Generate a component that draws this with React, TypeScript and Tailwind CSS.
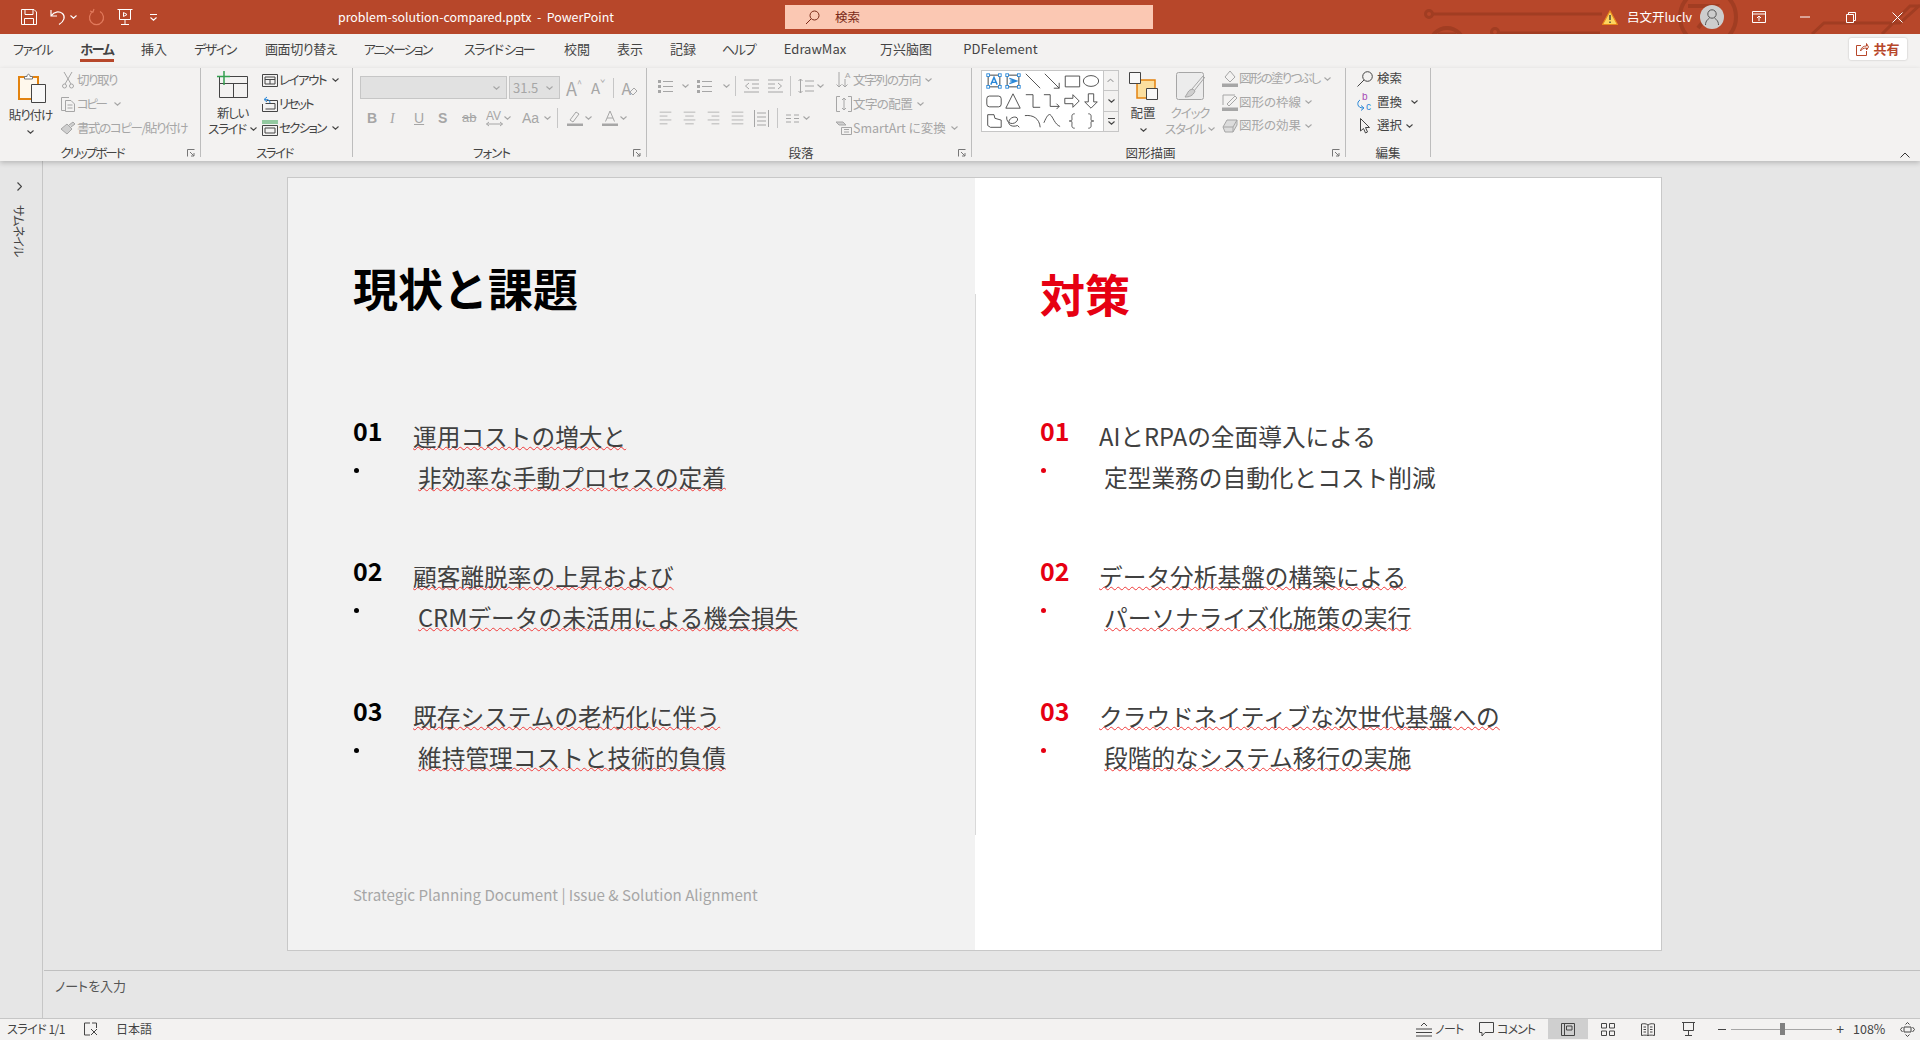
import React from "react";

const INK = "#444444";
const DIM = "#a6a6a6";
const BLUE = "#2b88d8";

type IcoProps = { w?: number; h?: number; vb?: string; c?: string; children: React.ReactNode };

const Ico: React.FC<IcoProps> = ({ w = 16, h = 16, vb, c = INK, children }) => (
  <svg width={w} height={h} viewBox={vb ?? `0 0 ${w} ${h}`} fill="none" stroke={c} strokeWidth="1" className="shrink-0">
    {children}
  </svg>
);

const Chev: React.FC<{ c?: string }> = ({ c = INK }) => (
  <svg width="7" height="4" viewBox="0 0 7 4" fill="none" stroke={c} strokeWidth="1.1" className="shrink-0">
    <path d="M0.5 0.5 3.5 3.2 6.5 0.5" />
  </svg>
);

const Launcher: React.FC = () => (
  <div className="absolute right-[5px] top-[5px]">
    <Ico w={8} h={8} c="#777777">
      <path d="M0.5 7.5V0.5H7.5M3 3 7 7M7 4V7H4" />
    </Ico>
  </div>
);

const Group: React.FC<{ w: string; label: string; labelCls?: string; launcher?: boolean; children: React.ReactNode }> = ({
  w,
  label,
  labelCls = "",
  launcher,
  children,
}) => (
  <div className={`flex shrink-0 ${w}`}>
    <div className="flex min-w-0 flex-1 flex-col">
      <div className="flex h-[76px]">{children}</div>
      <div className={`relative h-[17px] text-center text-[12.5px] leading-[17px] text-[#444444] ${labelCls}`}>
        {label}
        {launcher && <Launcher />}
      </div>
    </div>
    <div className="h-[89px] w-px shrink-0 bg-[#bdbdbd]" />
  </div>
);

const Row: React.FC<{
  dim?: boolean;
  icon?: React.ReactNode;
  label: string;
  chev?: boolean;
  gap?: string;
  track?: string;
  rowH?: string;
}> = ({ dim, icon, label, chev = true, gap = "ml-[6px]", track = "", rowH = "h-6" }) => (
  <div className={`flex items-center whitespace-nowrap text-[12.5px] ${rowH} ${dim ? "text-[#a6a6a6]" : "text-[#444444]"}`}>
    <div className="flex w-[19px] shrink-0 justify-center">{icon}</div>
    <span className={track}>{label}</span>
    {chev && (
      <span className={`flex ${gap}`}>
        <Chev c={dim ? DIM : INK} />
      </span>
    )}
  </div>
);

const TitleBar: React.FC = () => (
  <div className="relative flex h-[34px] items-center overflow-hidden bg-[#b7472a] pl-[20px] text-white">
    <svg width="500" height="34" viewBox="0 0 500 34" fill="none" stroke="#a13d22" strokeWidth="3" className="absolute left-[1420px] top-0">
      <circle cx="9" cy="14" r="3.5" />
      <path d="M13 14H182" />
      <circle cx="75" cy="32" r="3.5" />
      <path d="M79 33H180" />
      <circle cx="27" cy="45" r="17" strokeWidth="4" />
      <path d="M18 34H36" />
      <circle cx="288" cy="17" r="28" strokeWidth="4" />
      <path d="M268 6H296L278 28M296 6V14" strokeWidth="4" />
      <path d="M392 34 404 23H480L500 5M462 34 490 6H500" />
    </svg>
    <div className="relative flex items-center">
      <Ico w={18} h={18} c="#ffffff">
        <path d="M1.5 1.5H14L16.5 4V16.5H1.5ZM5 1.5V6.5H13V1.5M4.5 16.5V10.5H13.5V16.5" />
      </Ico>
      <div className="ml-[12px]">
        <Ico w={16} h={18} c="#ffffff">
          <path d="M1 2V8H7M1.5 7.5C4 3.5 9 3 12.5 5.5C15.5 8.5 14.5 13 9 16.5" strokeWidth="1.2" />
        </Ico>
      </div>
      <div className="ml-[4px]">
        <Chev c="#ffffff" />
      </div>
      <div className="ml-[11px]">
        <Ico w={17} h={18} c="#e27a5d">
          <path d="M5 3.5A7 7 0 1 0 12 3.5M6 1 5 4 2 3" strokeWidth="1.2" />
        </Ico>
      </div>
      <div className="ml-[12px]">
        <Ico w={16} h={18} c="#ffffff">
          <path d="M0.5 1.5H15.5M2.5 1.5V11.5H13.5V1.5M8 11.5V16.5M4 16.5H12M6.5 4.5V8.5L10 6.5Z" />
        </Ico>
      </div>
      <div className="ml-[17px] flex flex-col items-center gap-[2px]">
        <div className="h-px w-[7px] bg-white" />
        <Chev c="#ffffff" />
      </div>
    </div>
    <div className="relative ml-[181px] w-[447px] whitespace-pre text-[12.4px]">problem-solution-compared.pptx  -  PowerPoint</div>
    <div className="relative flex h-[24px] w-[368px] items-center bg-[#fbc8b3] pl-[20px] text-[12.5px] text-[#7a2a18]">
      <Ico w={15} h={15} c="#7a2a18">
        <circle cx="9.5" cy="5.5" r="4.5" />
        <path d="M6 9 1 14" />
      </Ico>
      <span className="ml-[15px]">検索</span>
    </div>
    <div className="relative ml-[449px] flex items-center">
      <Ico w={16} h={15}>
        <path d="M8 1 15.5 14.5H0.5Z" fill="#fcd55f" stroke="#e8891c" strokeWidth="1.2" />
        <path d="M8 5V10M8 11.5V13" stroke="#333333" strokeWidth="1.3" />
      </Ico>
      <span className="ml-[9px] w-[73px] whitespace-nowrap text-[12.5px]">吕文开luclv</span>
      <div className="flex h-[24px] w-[24px] items-center justify-center rounded-full bg-[#cdcdcd]">
        <Ico w={16} h={18} c="#555555">
          <circle cx="8" cy="6" r="4.2" />
          <path d="M1.5 17C1.5 12.5 4.5 11 5.5 10M14.5 17C14.5 12.5 11.5 11 10.5 10" />
        </Ico>
      </div>
      <div className="ml-[28px]">
        <Ico w={14} h={12} c="#ffffff">
          <path d="M0.5 0.5H13.5V11.5H0.5ZM0.5 3H13.5M7 10V5M5 7 7 5 9 7" />
        </Ico>
      </div>
      <div className="ml-[34px]">
        <Ico w={10} h={2} c="#ffffff">
          <path d="M0 1H10" />
        </Ico>
      </div>
      <div className="ml-[36px]">
        <Ico w={10} h={11} c="#ffffff">
          <path d="M0.5 2.5H7.5V10.5H0.5ZM2.5 2.5V0.5H9.5V8.5H7.5" />
        </Ico>
      </div>
      <div className="ml-[36px]">
        <Ico w={11} h={11} c="#ffffff">
          <path d="M0.5 0.5 10.5 10.5M10.5 0.5 0.5 10.5" />
        </Ico>
      </div>
    </div>
  </div>
);

const tabs = [
  { label: "ファイル", cls: "w-[38px] ml-[13px] tracking-[-1.5px]" },
  { label: "ホーム", cls: "w-[34px] ml-[29px] font-bold border-b-[3px] border-[#b7472a] tracking-[-1.2px]" },
  { label: "挿入", cls: "w-[25px] ml-[27px]" },
  { label: "デザイン", cls: "w-[42px] ml-[28px] tracking-[-1.5px]" },
  { label: "画面切り替え", cls: "w-[70px] ml-[29px] tracking-[-0.4px]" },
  { label: "アニメーション", cls: "w-[69px] ml-[28px] tracking-[-1.9px]" },
  { label: "スライド ショー", cls: "w-[69px] ml-[32px] tracking-[-1.5px]" },
  { label: "校閲", cls: "w-[26px] ml-[31px]" },
  { label: "表示", cls: "w-[25px] ml-[27px]" },
  { label: "記録", cls: "w-[26px] ml-[28px]" },
  { label: "ヘルプ", cls: "w-[33px] ml-[26px] tracking-[-1.3px]" },
  { label: "EdrawMax", cls: "w-[66px] ml-[27px]" },
  { label: "万兴脑图", cls: "w-[52px] ml-[32px]" },
  { label: "PDFelement", cls: "w-[77px] ml-[30px]" },
];

const TabBar: React.FC = () => (
  <div className="relative flex h-[34px] items-start bg-[#f3f2f1] text-[13px] leading-[30px] text-[#444444]">
    {tabs.map((t) => (
      <div key={t.label} className={`h-[28px] shrink-0 whitespace-pre text-center ${t.cls}`}>
        {t.label}
      </div>
    ))}
    <div className="ml-auto mr-[13px] mt-[4px] flex h-[22px] w-[58px] items-center justify-center gap-[4px] rounded-[2px] bg-white text-[13px] font-bold text-[#b7472a] shadow-[0_0_2px_rgba(0,0,0,0.25)]">
      <Ico w={13} h={14} c="#b7472a">
        <path d="M5 3.5H0.5V13.5H10.5V9M4.5 9C5 5.5 7.5 4 10.5 4V1.5L12.5 5 10.5 8V6C8 6 5.5 7 4.5 9Z" />
      </Ico>
      共有
    </div>
  </div>
);

const Clipboard: React.FC = () => (
  <Group w="w-[201px]" label="クリップボード" labelCls="pr-[16px] tracking-[-2px]" launcher>
    <div className="flex w-[58px] shrink-0 flex-col items-center pl-[3px] pt-[5px] text-[12.5px] text-[#444444]">
      <div className="pl-[3px]">
        <Ico w={28} h={30}>
          <path d="M1 4H20V26H1Z" stroke="#e3830f" strokeWidth="2" fill="#fff8ec" />
          <path d="M6.5 6V3.5H9C9 0.5 12 0.5 12 3.5H14.5V6Z" stroke="#777777" fill="#ffffff" />
          <path d="M13.5 11.5H27.5V29.5H13.5Z" stroke="#444444" fill="#f8f8f8" />
        </Ico>
      </div>
      <span className="mt-[4px] whitespace-nowrap leading-[16px] tracking-[-1px]">貼り付け</span>
      <div className="mt-[7px]">
        <Chev />
      </div>
    </div>
    <div className="flex flex-col">
      <Row
        dim
        chev={false}
        label="切り取り"
        track="tracking-[-1.5px]"
        icon={
          <Ico w={12} h={18} c={DIM}>
            <path d="M2 1 9 13M10 1 3 13" />
            <circle cx="2.5" cy="15" r="2" />
            <circle cx="9.5" cy="15" r="2" />
          </Ico>
        }
      />
      <Row
        dim
        label="コピー"
        gap="ml-[9px]"
        track="tracking-[-2.5px]"
        icon={
          <Ico w={16} h={16} c={DIM}>
            <path d="M5 14.5H1.5V1.5H9M5.5 4.5H11L14.5 8V15.5H5.5ZM7.5 9H12.5M7.5 12H12.5" />
          </Ico>
        }
      />
      <Row
        dim
        chev={false}
        label="書式のコピー/貼り付け"
        track="tracking-[-1.4px]"
        icon={
          <Ico w={16} h={14} c={DIM}>
            <path d="M1 8 7 3 12 8 7 13ZM9 4 13 1 15 3 11 6" fill="#cfcfcf" />
          </Ico>
        }
      />
    </div>
  </Group>
);

const Slides: React.FC = () => (
  <Group w="w-[152px]" label="スライド" labelCls="pr-[4px] tracking-[-1.5px]">
    <div className="flex w-[59px] shrink-0 flex-col items-center pl-[4px] pt-[3px] text-[12.5px] leading-[16px] text-[#444444] tracking-[-1.3px]">
      <Ico w={31} h={27}>
        <path d="M2.5 5.5H30.5V26.5H2.5ZM2.5 12.5H30.5M16.5 12.5V26.5" />
        <path d="M0 5.5H13M7 0V14" stroke="#33a04f" strokeWidth="1.5" />
      </Ico>
      <span className="mt-[7px] whitespace-nowrap">新しい</span>
      <div className="flex items-center gap-[4px] whitespace-nowrap">
        スライド
        <Chev />
      </div>
    </div>
    <div className="flex flex-col">
      <Row
        label="レイアウト"
        track="tracking-[-1.5px]"
        icon={
          <Ico w={16} h={13}>
            <path d="M0.5 0.5H15.5V12.5H0.5ZM3 3H13V10H3ZM3 5.5H13M8 5.5V10" />
          </Ico>
        }
      />
      <Row
        chev={false}
        label="リセット"
        track="tracking-[-2px]"
        icon={
          <Ico w={16} h={16}>
            <path d="M4.5 4.5H15.5V15.5H0.5V8M3.5 7.5H13V13H3.5" />
            <path d="M5 1 2 3.5 5 6M2.5 3.5C6 3 8 4 8 7" stroke={BLUE} />
          </Ico>
        }
      />
      <Row
        label="セクション"
        track="tracking-[-1.7px]"
        icon={
          <Ico w={16} h={16}>
            <path d="M0 1H16M0 3H16" stroke="#33a04f" />
            <path d="M0.5 5.5H15.5V15.5H0.5ZM3 8H13V13H3Z" />
          </Ico>
        }
      />
    </div>
  </Group>
);

const Btn: React.FC<{ cls: string; children: React.ReactNode }> = ({ cls, children }) => (
  <div className={`flex shrink-0 items-center ${cls}`}>{children}</div>
);

const Font: React.FC = () => (
  <Group w="w-[294px]" label="フォント" labelCls="pr-[16px] tracking-[-1px]" launcher>
    <div className="flex flex-col pl-[7px] pt-[8px] text-[#a6a6a6]">
      <div className="flex h-[23px] items-center">
        <div className="flex h-[23px] w-[147px] items-center justify-end border border-[#c6c6c6] bg-[#e1e1e1] pr-[6px]">
          <Chev c={DIM} />
        </div>
        <div className="ml-[2px] flex h-[23px] w-[51px] items-center justify-between border border-[#c6c6c6] bg-[#e1e1e1] pl-[3px] pr-[6px] text-[13px]">
          31.5
          <Chev c={DIM} />
        </div>
        <span className="ml-[6px] text-[18px] leading-none">A</span>
        <span className="-mt-[8px] text-[9px]">^</span>
        <span className="ml-[9px] text-[15px] leading-none">A</span>
        <span className="-mt-[8px] text-[9px]">ˇ</span>
        <div className="ml-[8px] h-[20px] w-px bg-[#c6c6c6]" />
        <span className="ml-[7px] text-[16px] leading-none">A</span>
        <div className="-ml-[2px] mt-[8px]">
          <Ico w={9} h={9} c={DIM}>
            <path d="M1 5 5 1 8 4 4 8Z" />
          </Ico>
        </div>
      </div>
      <div className="mt-[7px] flex h-6 items-center text-[14px]">
        <Btn cls="ml-[7px] w-[23px] font-bold font-['Liberation_Sans',sans-serif]">B</Btn>
        <Btn cls="w-[24px] italic font-['Liberation_Serif',serif]">I</Btn>
        <Btn cls="w-[24px] underline font-['Liberation_Sans',sans-serif]">U</Btn>
        <Btn cls="w-[24px] font-bold font-['Liberation_Sans',sans-serif]">S</Btn>
        <Btn cls="w-[24px] line-through text-[13px] font-['Liberation_Sans',sans-serif]">ab</Btn>
        <Btn cls="w-[24px]">
          <Ico w={17} h={18} c={DIM}>
            <text x="0" y="11" fontSize="12" fontFamily="Liberation Sans" fill={DIM} stroke="none">
              AV
            </text>
            <path d="M0.5 15H16.5M3 13 0.5 15 3 17M14 13 16.5 15 14 17" />
          </Ico>
          <div className="ml-[1px]">
            <Chev c={DIM} />
          </div>
        </Btn>
        <Btn cls="ml-[12px] w-[22px] font-['Liberation_Sans',sans-serif]">Aa</Btn>
        <Btn cls="w-[13px]">
          <Chev c={DIM} />
        </Btn>
        <div className="h-[20px] w-px bg-[#c6c6c6]" />
        <Btn cls="ml-[9px] w-[24px]">
          <Ico w={16} h={16} c={DIM}>
            <path d="M3 10 9 2 12 4 6 12Z" />
            <path d="M0 13.5H16V16H0Z" fill={DIM} stroke="none" />
          </Ico>
          <div className="ml-[2px]">
            <Chev c={DIM} />
          </div>
        </Btn>
        <Btn cls="ml-[11px] w-[24px]">
          <Ico w={16} h={16} c={DIM}>
            <path d="M3.5 11.5 8 1 12.5 11.5M5 8H11" />
            <path d="M0 13.5H16V16H0Z" fill={DIM} stroke="none" />
          </Ico>
          <div className="ml-[2px]">
            <Chev c={DIM} />
          </div>
        </Btn>
      </div>
    </div>
  </Group>
);

const lines = (rows: [number, number][]) => rows.map(([a, b], i) => <path key={i} d={`M${a} ${2.5 + i * 5}H${b}`} />);

const ListIco: React.FC = () => (
  <Ico w={15} h={14} c={DIM}>
    <path d="M0 1H3V4H0ZM0 6H3V9H0ZM0 11H3V14H0Z" fill={DIM} stroke="none" />
    {lines([[5, 15], [5, 15], [5, 15]])}
  </Ico>
);

const Align: React.FC<{ rows: [number, number][] }> = ({ rows }) => (
  <Ico w={15} h={14} vb="0 0 15 18" c={DIM}>
    {rows.map(([a, b], i) => (
      <path key={i} d={`M${a} ${1.5 + i * 5}H${b}`} />
    ))}
  </Ico>
);

const Paragraph: React.FC = () => (
  <Group w="w-[325px]" label="段落" labelCls="pr-[16px]" launcher>
    <div className="flex w-[187px] shrink-0 flex-col pl-[11px] pt-[6px]">
      <div className="flex h-6 items-center">
        <Btn cls="w-[24px]">
          <ListIco />
        </Btn>
        <Btn cls="w-[15px]">
          <Chev c={DIM} />
        </Btn>
        <Btn cls="w-[26px]">
          <ListIco />
        </Btn>
        <Btn cls="w-[12px]">
          <Chev c={DIM} />
        </Btn>
        <div className="h-[20px] w-px bg-[#c6c6c6]" />
        <Btn cls="ml-[8px] w-[24px]">
          <Ico w={15} h={14} c={DIM}>
            <path d="M0 1H15M8 5H15M8 9H15M0 13H15M5 4 1.5 7 5 10" />
          </Ico>
        </Btn>
        <Btn cls="w-[22px]">
          <Ico w={15} h={14} c={DIM}>
            <path d="M0 1H15M0 5H7M0 9H7M0 13H15M10 4 13.5 7 10 10" />
          </Ico>
        </Btn>
        <div className="h-[20px] w-px bg-[#c6c6c6]" />
        <Btn cls="ml-[7px] w-[19px]">
          <Ico w={16} h={16} c={DIM}>
            <path d="M2.5 1V15M0.5 3 2.5 1 4.5 3M0.5 13 2.5 15 4.5 13M7 3H16M7 8H16M7 13H16" />
          </Ico>
        </Btn>
        <Chev c={DIM} />
      </div>
      <div className="mt-[8px] flex h-6 items-center">
        <Btn cls="w-[24px]">
          <Align rows={[[0, 15], [0, 10], [0, 15], [0, 10]]} />
        </Btn>
        <Btn cls="w-[24px]">
          <Align rows={[[0, 15], [2, 13], [0, 15], [2, 13]]} />
        </Btn>
        <Btn cls="w-[24px]">
          <Align rows={[[0, 15], [5, 15], [0, 15], [5, 15]]} />
        </Btn>
        <Btn cls="w-[24px]">
          <Align rows={[[0, 15], [0, 15], [0, 15], [0, 15]]} />
        </Btn>
        <Btn cls="w-[23px]">
          <Ico w={15} h={17} c={DIM}>
            <path d="M0.5 0V17M14.5 0V17M3 3H12M3 7H12M3 11H12M3 15H12" />
          </Ico>
        </Btn>
        <div className="h-[20px] w-px bg-[#c6c6c6]" />
        <Btn cls="ml-[8px] w-[17px]">
          <Ico w={13} h={9} c={DIM}>
            <path d="M0 1H5M8 1H13M0 4.5H5M8 4.5H13M0 8H5M8 8H13" />
          </Ico>
        </Btn>
        <Chev c={DIM} />
      </div>
    </div>
    <div className="flex flex-col">
      <Row
        dim
        gap="ml-[5px]"
        label="文字列の方向"
        track="tracking-[-1.2px]"
        icon={
          <Ico w={16} h={18} c={DIM}>
            <path d="M3 1V16M0.5 13.5 3 16 5.5 13.5M9 8V16M6.5 13.5 9 16 11.5 13.5" />
            <text x="9" y="7" fontSize="8" fontFamily="Liberation Sans" fill={DIM} stroke="none">
              A
            </text>
          </Ico>
        }
      />
      <Row
        dim
        gap="ml-[5px]"
        label="文字の配置"
        track="tracking-[-0.6px]"
        icon={
          <Ico w={16} h={16} c={DIM}>
            <path d="M4 0.5H0.5V15.5H4M12 0.5H15.5V15.5H12M8 2V14M6 4 8 2 10 4M6 12 8 14 10 12" />
          </Ico>
        }
      />
      <Row
        dim
        gap="ml-[5px]"
        label="SmartArt に変換"
        icon={
          <Ico w={16} h={14} c={DIM}>
            <path d="M0 1H7L10 4H3Z" fill="#cfcfcf" />
            <path d="M5.5 6.5H15.5V13.5H5.5ZM8 8.5H13M8 11H13" />
          </Ico>
        }
      />
    </div>
  </Group>
);

const Tb: React.FC<{ rot?: boolean }> = ({ rot }) => (
  <>
    <path d="M3.5 3.5H16.5V16.5H3.5Z" stroke="#333333" />
    {[
      [3.5, 3.5],
      [16.5, 3.5],
      [3.5, 16.5],
      [16.5, 16.5],
    ].map(([x, y]) => (
      <rect key={`${x}-${y}`} x={x - 1.5} y={y - 1.5} width="3" height="3" fill="#ffffff" stroke={BLUE} />
    ))}
    {rot ? (
      <path d="M6 7 14 10 6 13M7 10H12" stroke={BLUE} strokeWidth="1.6" />
    ) : (
      <path d="M6.5 14 10 6 13.5 14M8 11.5H12" stroke={BLUE} strokeWidth="1.6" />
    )}
  </>
);

const shapes: React.ReactNode[] = [
  <Tb key="a" />,
  <Tb key="b" rot />,
  <path key="c" d="M2 2 18 18" />,
  <path key="d" d="M2 2 18 18M18 12V18H12" />,
  <path key="e" d="M2.5 4.5H18.5V16.5H2.5Z" />,
  <ellipse key="f" cx="10" cy="10" rx="8.5" ry="6" />,
  <rect key="g" x="2" y="4.5" width="16" height="12" rx="3" />,
  <path key="h" d="M10 2 18 18H2Z" />,
  <path key="i" d="M2 3H10V17H18" />,
  <path key="j" d="M1 3H8V16H18M15 13 18 16 15 19" />,
  <path key="k" d="M2 7H11V3L18 10 11 17V13H2Z" />,
  <path key="l" d="M7 2H13V11H17L10 18 3 11H7Z" />,
  <path key="m" d="M3 3H10L11 7 18 9V17H6L3 15Z" strokeLinejoin="round" />,
  <path key="n" d="M3 5C2 14 12 15 15 9C16 4 8 5 6 9C3 15 10 17 15 15L17 17" />,
  <path key="o" d="M1 4C10 3 17 7 18 17" />,
  <path key="p" d="M1 12C4 5 6 2 8 3C11 5 13 14 19 16" />,
  <path key="q" d="M13 2C9 2 10 5 10 8C10 10 9 10 7 10C9 10 10 10 10 12C10 15 9 18 13 18" />,
  <path key="r" d="M7 2C11 2 10 5 10 8C10 10 11 10 13 10C11 10 10 10 10 12C10 15 11 18 7 18" />,
];

const Drawing: React.FC = () => (
  <Group w="w-[374px]" label="図形描画" labelCls="pr-[16px]" launcher>
    <div className="ml-[9px] mt-[2px] flex h-[62px] w-[138px] shrink-0 border border-[#c6c6c6] bg-white">
      <div className="grid flex-1 grid-cols-6 px-[2px]">
        {shapes.map((s, i) => (
          <div key={i} className="flex items-center justify-center">
            <Ico w={18} h={18} vb="0 0 20 20">
              {s}
            </Ico>
          </div>
        ))}
      </div>
      <div className="flex w-[15px] shrink-0 flex-col border-l border-[#c6c6c6] bg-[#f3f2f1]">
        <div className="flex flex-1 rotate-180 items-center justify-center">
          <Chev c={DIM} />
        </div>
        <div className="flex flex-1 items-center justify-center border-t border-[#c6c6c6]">
          <Chev />
        </div>
        <div className="flex flex-1 flex-col items-center justify-center gap-[2px] border-t border-[#c6c6c6]">
          <div className="h-px w-[7px] bg-[#444444]" />
          <Chev />
        </div>
      </div>
    </div>
    <div className="ml-[2px] flex w-[44px] shrink-0 flex-col items-center pt-[4px] text-[12.5px] leading-[16px] text-[#444444]">
      <Ico w={29} h={28}>
        <path d="M8 8H26V26H8Z" stroke="#e3830f" strokeWidth="1.5" fill="#fbdf9f" />
        <path d="M0.5 0.5H11.5V11.5H0.5Z" fill="#f8f8f8" />
        <path d="M17.5 16.5H28.5V27.5H17.5Z" fill="#f8f8f8" />
      </Ico>
      <span className="mt-[5px]">配置</span>
      <div className="mt-[7px]">
        <Chev />
      </div>
    </div>
    <div className="ml-[3px] flex w-[44px] shrink-0 flex-col items-center pt-[4px] text-[12.5px] leading-[16px] text-[#a6a6a6] tracking-[-1.2px]">
      <Ico w={29} h={28} c={DIM}>
        <rect x="0.5" y="0.5" width="27" height="27" rx="2" fill="#ececec" />
        <path d="M27 4 16 17M29 5 18 19" />
        <path d="M11 22C13 17 17 16 19 19C17 24 13 25 9 25Z" fill="#cfcfcf" />
      </Ico>
      <span className="mt-[5px] whitespace-nowrap">クイック</span>
      <div className="flex items-center gap-[3px] whitespace-nowrap">
        スタイル
        <Chev c={DIM} />
      </div>
    </div>
    <div className="-mt-px ml-[8px] flex flex-col">
      <Row
        dim
        gap="ml-[4px]"
        rowH="h-[23.5px]"
        label="図形の塗りつぶし"
        track="tracking-[-1.7px]"
        icon={
          <Ico w={16} h={17} c={DIM}>
            <path d="M3 7 8 1 13 7 8 12Z" />
            <path d="M0 13.5H16V17H0Z" fill={DIM} stroke="none" />
          </Ico>
        }
      />
      <Row
        dim
        gap="ml-[4px]"
        rowH="h-[23.5px]"
        label="図形の枠線"
        icon={
          <Ico w={16} h={17} c={DIM}>
            <path d="M1 11V1H13M5 10 13 2 15 4 7 12Z" />
            <path d="M0 13.5H16V17H0Z" fill={DIM} stroke="none" />
          </Ico>
        }
      />
      <Row
        dim
        gap="ml-[4px]"
        rowH="h-[23.5px]"
        label="図形の効果"
        icon={
          <Ico w={16} h={14} c={DIM}>
            <path d="M1 8 5 1H15V6L11 13H3Z" fill="#dcdcdc" />
            <path d="M1 8H11V13M11 8 15 1" />
          </Ico>
        }
      />
    </div>
  </Group>
);

const Edit: React.FC = () => (
  <Group w="w-[85px]" label="編集">
    <div className="-mt-px flex flex-col pl-[11px]">
      <div className="flex h-[23.5px] items-center text-[12.5px] text-[#444444]">
        <div className="w-[20px] shrink-0">
          <Ico w={16} h={16}>
            <circle cx="10.5" cy="5.5" r="4.8" />
            <path d="M7 9 0.5 15.5" />
          </Ico>
        </div>
        検索
      </div>
      <div className="flex h-[23.5px] items-center text-[12.5px] text-[#444444]">
        <div className="w-[20px] shrink-0">
          <Ico w={15} h={18}>
            <text x="5" y="7" fontSize="10" fontFamily="Liberation Sans" fill="#a64bb5" stroke="none">
              b
            </text>
            <text x="9" y="17" fontSize="10" fontFamily="Liberation Sans" fill={BLUE} stroke="none">
              c
            </text>
            <path d="M3 7C-0.5 9 0 15 6 15M4 12.5 7 15 4 17.5" stroke={BLUE} />
          </Ico>
        </div>
        置換
        <div className="ml-[9px]">
          <Chev />
        </div>
      </div>
      <div className="flex h-[23.5px] items-center text-[12.5px] text-[#444444]">
        <div className="w-[20px] shrink-0 pl-[3px]">
          <Ico w={10} h={16}>
            <path d="M0.5 0.5V13L3.5 10.5 5.5 15 7.5 14 5.5 9.5H9.5Z" />
          </Ico>
        </div>
        選択
        <div className="ml-[4px]">
          <Chev />
        </div>
      </div>
    </div>
  </Group>
);

const Ribbon: React.FC = () => (
  <div className="relative z-10 flex h-[93px] bg-[#f3f2f1] shadow-[0_2px_5px_rgba(0,0,0,0.2)]">
    <Clipboard />
    <Slides />
    <Font />
    <Paragraph />
    <Drawing />
    <Edit />
    <div className="ml-auto mr-[10px] mt-[84px]">
      <svg width="10" height="6" viewBox="0 0 10 6" fill="none" stroke="#333333">
        <path d="M0.5 5.5 5 1 9.5 5.5" />
      </svg>
    </div>
  </div>
);

type Item = { n: string; a: string; b: string; checkA?: boolean };

const problems: Item[] = [
  { n: "01", a: "運用コストの増大と", b: "非効率な手動プロセスの定着", checkA: true },
  { n: "02", a: "顧客離脱率の上昇および", b: "CRMデータの未活用による機会損失", checkA: true },
  { n: "03", a: "既存システムの老朽化に伴う", b: "維持管理コストと技術的負債", checkA: true },
];

const answers: (Item & { checkB: boolean })[] = [
  { n: "01", a: "AIとRPAの全面導入による", b: "定型業務の自動化とコスト削減", checkB: false },
  { n: "02", a: "データ分析基盤の構築による", b: "パーソナライズ化施策の実行", checkA: true, checkB: true },
  { n: "03", a: "クラウドネイティブな次世代基盤への", b: "段階的なシステム移行の実施", checkA: true, checkB: true },
];

const squiggle = "underline decoration-wavy decoration-[#f03a3a] decoration-1 underline-offset-[0px]";

const PointRow: React.FC<{ item: Item; checkB?: boolean; red?: boolean; numW: string }> = ({ item, checkB = true, red, numW }) => (
  <div className="flex h-[140px]">
    <div className={`shrink-0 ${numW}`}>
      <div className={`text-[25px] font-bold leading-[29px] ${red ? "text-[#e60012]" : "text-black"}`}>{item.n}</div>
      <div className={`ml-[1px] mt-[23px] h-[5px] w-[5px] rounded-full ${red ? "bg-[#e60012]" : "bg-black"}`} />
    </div>
    <div className="text-[23.7px] leading-[41px] text-[#404040] [text-decoration-skip-ink:none]">
      <div className="whitespace-nowrap">
        <span className={item.checkA ? squiggle : ""}>{item.a}</span>
      </div>
      <div className="ml-[5px] whitespace-nowrap">
        <span className={checkB ? squiggle : ""}>{item.b}</span>
      </div>
    </div>
  </div>
);

const Slide: React.FC = () => (
  <div className="flex h-[774px] w-[1375px] shrink-0 border border-[#c8c8c8] bg-white [font-feature-settings:normal]">
    <div className="w-[687px] shrink-0 bg-[#f2f2f2] pl-[65px]">
      <div className="h-[238px] pt-[80px] text-[45px] font-bold leading-[60px] text-black">現状と課題</div>
      {problems.map((p) => (
        <PointRow key={p.n} item={p} numW="w-[60px]" />
      ))}
      <div className="mt-[48px] text-[15.1px] leading-[20px] text-[#a6a6a6]">Strategic Planning Document | Issue &amp; Solution Alignment</div>
    </div>
    <div className="mt-[116px] h-[541px] w-px shrink-0 bg-[#d9d9d9]" />
    <div className="flex-1 pl-[64px]">
      <div className="h-[238px] pt-[86px] text-[45px] font-bold leading-[60px] text-[#e60012]">対策</div>
      {answers.map((p) => (
        <PointRow key={p.n} item={p} checkB={p.checkB} red numW="w-[59px]" />
      ))}
    </div>
  </div>
);

const StatusBar: React.FC = () => (
  <div className="flex h-[22px] items-center border-t border-[#c6c6c6] bg-[#f3f2f1] pb-px text-[12px] text-[#444444]">
    <span className="ml-[7px] w-[77px] whitespace-nowrap tracking-[-0.5px]">スライド 1/1</span>
    <Ico w={14} h={14}>
      <path d="M6 1H0.5V13H6M8 1H12.5V6M7 7 13 13M13 7 7 13" />
    </Ico>
    <span className="ml-[18px]">日本語</span>
    <div className="ml-auto flex h-full items-center">
      <Ico w={16} h={16}>
        <path d="M0 8H16M0 11.5H16M0 15H16M5 5 8 2 11 5" />
      </Ico>
      <span className="ml-[3px] w-[44px] tracking-[-0.7px]">ノート</span>
      <Ico w={15} h={15}>
        <path d="M0.5 0.5H14.5V10.5H6L3 14V10.5H0.5Z" />
      </Ico>
      <span className="ml-[3px] w-[51px] whitespace-nowrap tracking-[-1px]">コメント</span>
      <div className="flex h-full w-[40px] items-center justify-center bg-[#cfcfcf]">
        <Ico w={14} h={13}>
          <path d="M0.5 0.5H13.5V12.5H0.5ZM3.5 0.5V12.5M5.5 3H11V7H5.5Z" />
        </Ico>
      </div>
      <div className="flex w-[40px] justify-center">
        <Ico w={14} h={13}>
          <path d="M0.5 0.5H5.5V5H0.5ZM8.5 0.5H13.5V5H8.5ZM0.5 8H5.5V12.5H0.5ZM8.5 8H13.5V12.5H8.5Z" />
        </Ico>
      </div>
      <div className="flex w-[40px] justify-center">
        <Ico w={14} h={13}>
          <path d="M7 2C5 0.5 3 0.5 0.5 1V12.5C3 12 5 12 7 12.5C9 12 11 12 13.5 12.5V1C11 0.5 9 0.5 7 2ZM7 2V12.5M2.5 4H5M2.5 6.5H5M2.5 9H5M9 4H11.5M9 6.5H11.5M9 9H11.5" />
        </Ico>
      </div>
      <div className="flex w-[40px] justify-center">
        <Ico w={13} h={14}>
          <path d="M0 0.5H13M1.5 0.5V8.5H11.5V0.5M6.5 8.5V13.5M3 13.5H10" />
        </Ico>
      </div>
      <div className="ml-[10px] h-px w-[8px] bg-[#444444]" />
      <div className="relative ml-[5px] flex w-[101px] items-center">
        <div className="h-px w-full bg-[#a6a6a6]" />
        <div className="absolute left-[49px] h-[12px] w-[5px] bg-[#808080]" />
      </div>
      <span className="ml-[4px] text-[14px] leading-none">+</span>
      <span className="ml-[9px] w-[41px] text-[12.5px]">108%</span>
      <div className="mr-[5px] ml-[6px]">
        <Ico w={15} h={15}>
          <path d="M4 5H11V10H4ZM2.5 5 0.5 7.5 2.5 10M12.5 5 14.5 7.5 12.5 10M5.5 2.5 7.5 0.5 9.5 2.5M5.5 12.5 7.5 14.5 9.5 12.5" />
        </Ico>
      </div>
    </div>
  </div>
);

const App: React.FC = () => (
  <div className="flex h-[1040px] w-[1920px] flex-col overflow-hidden bg-[#e6e6e6] font-['Noto_Sans_CJK_JP','Noto_Sans',sans-serif] [font-feature-settings:'palt']">
    <TitleBar />
    <TabBar />
    <Ribbon />
    <div className="flex min-h-0 flex-1">
      {/* thumbnail rail */}
      <div className="flex w-[43px] shrink-0 flex-col items-center border-r border-[#c6c6c6] pr-[4px] pt-[21px]">
        <svg width="5" height="9" viewBox="0 0 5 9" fill="none" stroke="#444444" strokeWidth="1.2">
          <path d="M0.5 0.5 4.5 4.5 0.5 8.5" />
        </svg>
        <span className="mt-[14px] text-[12px] leading-[14px] tracking-[-0.8px] text-[#444444] [writing-mode:vertical-rl] [text-orientation:sideways]">サムネイル</span>
      </div>
      <div className="flex min-w-0 flex-1 flex-col">
        <div className="flex-1 pl-[244px] pt-[16px]">
          <Slide />
        </div>
        <div className="ml-[1px] h-[48px] border-t border-[#c0c0c0] pl-[11px] pt-[5px] text-[13px] leading-[20px] text-[#555555]">ノートを入力</div>
      </div>
    </div>
    <StatusBar />
  </div>
);

export default App;
